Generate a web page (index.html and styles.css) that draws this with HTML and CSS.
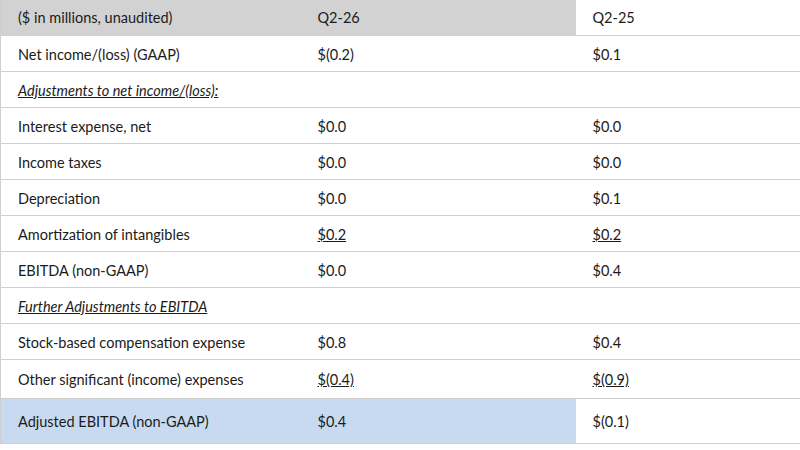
FILE: index.html
```html
<!DOCTYPE html>
<html>
<head>
<meta charset="utf-8">
<link rel="stylesheet" href="styles.css">
</head>
<body>
<table class="recon">
  <colgroup><col class="c1"><col class="c2"><col class="c3"></colgroup>
  <tr class="head"><td class="shade">($ in millions, unaudited)</td><td class="shade">Q2-26</td><td>Q2-25</td></tr>
  <tr><td>Net income/(loss) (GAAP)</td><td>$(0.2)</td><td>$0.1</td></tr>
  <tr><td class="sub">Adjustments to net income/(loss):</td><td></td><td></td></tr>
  <tr><td>Interest expense, net</td><td>$0.0</td><td>$0.0</td></tr>
  <tr><td>Income taxes</td><td>$0.0</td><td>$0.0</td></tr>
  <tr><td>Depreciation</td><td>$0.0</td><td>$0.1</td></tr>
  <tr><td>Amortization of intangibles</td><td><span class="u">$0.2</span></td><td><span class="u">$0.2</span></td></tr>
  <tr><td>EBITDA (non-GAAP)</td><td>$0.0</td><td>$0.4</td></tr>
  <tr><td class="sub">Further Adjustments to EBITDA</td><td></td><td></td></tr>
  <tr><td>Stock-based compensation expense</td><td>$0.8</td><td>$0.4</td></tr>
  <tr class="tall"><td>Other significant (income) expenses</td><td><span class="u">$(0.4)</span></td><td><span class="u">$(0.9)</span></td></tr>
  <tr class="total"><td class="blue">Adjusted EBITDA (non-GAAP)</td><td class="blue">$0.4</td><td>$(0.1)</td></tr>
</table>
</body>
</html>
```

FILE: styles.css
```css
html, body {
  margin: 0;
  padding: 0;
  background: #ffffff;
}
body {
  font-family: Lato, "Open Sans", "Liberation Sans", sans-serif;
  font-size: 14.5px;
  color: #1b1b1b;
}
.recon {
  border-collapse: collapse;
  table-layout: fixed;
  width: 800px;
}
.c1 { width: 300px; }
.c2 { width: 275px; }
.c3 { width: 225px; }
.recon td {
  height: 36px;
  box-sizing: border-box;
  padding: 2px 0 0 17px;
  border-top: 1px solid #cfcfcf;
  border-bottom: 1px solid #cfcfcf;
  vertical-align: middle;
  white-space: nowrap;
}
.recon td:first-child { border-left: 1px solid #cfcfcf; }
.recon td:last-child { border-right: 1px solid #cfcfcf; }
.recon .head td {
  height: 35px;
  border-top: none;
  padding-top: 0;
}
.recon .tall td { height: 39px; }
.recon .total td { height: 45px; }
.shade { background: #d2d2d2; }
.blue { background: #c8daf0; }
.sub {
  font-style: italic;
  text-decoration: underline;
}
.u { text-decoration: underline; }
```
